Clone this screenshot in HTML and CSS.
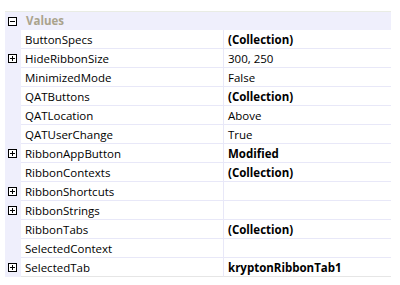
FILE: index.html
```html
<!DOCTYPE html>
<html>
<head>
	<title>Properties</title>
	<link rel="stylesheet" href="styles.css">
</head>
<body>
<div class="grid">
	<div class="row header">
		<div class="gutter"><svg class="box" width="9" height="9" viewBox="0 0 9 9"><rect x="0.5" y="0.5" width="8" height="8" fill="#fff" stroke="#000"/><path d="M2 4.5h5" stroke="#000"/></svg></div>
		<div class="cat">Values</div>
	</div>
	<div class="row">
		<div class="gutter"></div>
		<div class="name">ButtonSpecs</div>
		<div class="value bold">(Collection)</div>
	</div>
	<div class="row">
		<div class="gutter"><svg class="box" width="9" height="9" viewBox="0 0 9 9"><rect x="0.5" y="0.5" width="8" height="8" fill="#fff" stroke="#000"/><path d="M2 4.5h5M4.5 2v5" stroke="#000"/></svg></div>
		<div class="name">HideRibbonSize</div>
		<div class="value">300, 250</div>
	</div>
	<div class="row">
		<div class="gutter"></div>
		<div class="name">MinimizedMode</div>
		<div class="value">False</div>
	</div>
	<div class="row">
		<div class="gutter"></div>
		<div class="name">QATButtons</div>
		<div class="value bold">(Collection)</div>
	</div>
	<div class="row">
		<div class="gutter"></div>
		<div class="name">QATLocation</div>
		<div class="value">Above</div>
	</div>
	<div class="row">
		<div class="gutter"></div>
		<div class="name">QATUserChange</div>
		<div class="value">True</div>
	</div>
	<div class="row">
		<div class="gutter"><svg class="box" width="9" height="9" viewBox="0 0 9 9"><rect x="0.5" y="0.5" width="8" height="8" fill="#fff" stroke="#000"/><path d="M2 4.5h5M4.5 2v5" stroke="#000"/></svg></div>
		<div class="name">RibbonAppButton</div>
		<div class="value bold">Modified</div>
	</div>
	<div class="row">
		<div class="gutter"></div>
		<div class="name">RibbonContexts</div>
		<div class="value bold">(Collection)</div>
	</div>
	<div class="row">
		<div class="gutter"><svg class="box" width="9" height="9" viewBox="0 0 9 9"><rect x="0.5" y="0.5" width="8" height="8" fill="#fff" stroke="#000"/><path d="M2 4.5h5M4.5 2v5" stroke="#000"/></svg></div>
		<div class="name">RibbonShortcuts</div>
		<div class="value"></div>
	</div>
	<div class="row">
		<div class="gutter"><svg class="box" width="9" height="9" viewBox="0 0 9 9"><rect x="0.5" y="0.5" width="8" height="8" fill="#fff" stroke="#000"/><path d="M2 4.5h5M4.5 2v5" stroke="#000"/></svg></div>
		<div class="name">RibbonStrings</div>
		<div class="value"></div>
	</div>
	<div class="row">
		<div class="gutter"></div>
		<div class="name">RibbonTabs</div>
		<div class="value bold">(Collection)</div>
	</div>
	<div class="row">
		<div class="gutter"></div>
		<div class="name">SelectedContext</div>
		<div class="value"></div>
	</div>
	<div class="row last">
		<div class="gutter"><svg class="box" width="9" height="9" viewBox="0 0 9 9"><rect x="0.5" y="0.5" width="8" height="8" fill="#fff" stroke="#000"/><path d="M2 4.5h5M4.5 2v5" stroke="#000"/></svg></div>
		<div class="name">SelectedTab</div>
		<div class="value bold">kryptonRibbonTab1</div>
	</div>
</div>
</body>
</html>
```

FILE: styles.css
```css
body {
	margin: 0;
	background: #fff;
	font-family: "Open Sans", "Noto Sans", sans-serif;
	font-size: 11.5px;
	color: #000;
}

.grid {
	margin: 11px 0 0 5px;
	width: 386px;
}

.row {
	display: flex;
	height: 19px;
	line-height: 19px;
}

.row .name,
.row .value {
	border-bottom: 1px solid #e8e8f8;
}

.row.last .name,
.row.last .value {
	border-bottom-color: #e6e6e6;
}

.gutter {
	width: 16px;
	flex: none;
	background: #efeffc;
	display: flex;
	align-items: center;
	padding-bottom: 1px;
	box-sizing: border-box;
}

.box {
	display: block;
	margin-left: 3px;
	margin-top: 1px;
}

.header {
	background: #efeffc;
	border-top: 1px solid #e9ece4;
	height: 19px;
	box-sizing: border-box;
	line-height: 17px;
}

.header .gutter {
	padding-bottom: 0;
}

.cat {
	padding-left: 5px;
	color: #aaa38c;
	font-weight: bold;
}

.name {
	width: 198px;
	padding-left: 4px;
	border-right: 1px solid #e8e8f8;
	white-space: nowrap;
}

.value {
	flex: 1;
	padding-left: 4px;
}

.bold {
	font-weight: bold;
}
```
